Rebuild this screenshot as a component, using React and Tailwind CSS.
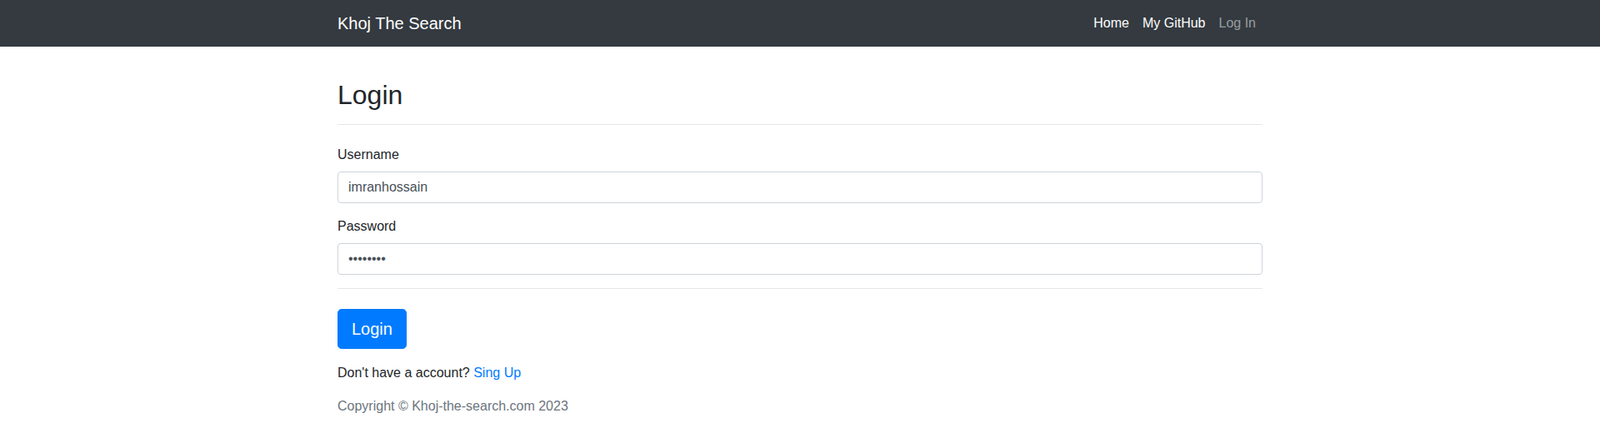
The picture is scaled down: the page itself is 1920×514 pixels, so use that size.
import React from 'react';

const font = { fontFamily: '"Liberation Sans", Arial, sans-serif' };

const Navbar = () => (
  <nav className="bg-[#343a40] h-14">
    <div className="w-[1140px] mx-auto px-[15px] h-full flex items-center justify-between">
      <a href="#" className="text-white text-[20px] leading-[30px] py-[5px]">
        Khoj The Search
      </a>
      <ul className="flex items-center">
        <li><a href="#" className="block px-2 py-2 text-white text-base leading-6">Home</a></li>
        <li><a href="#" className="block px-2 py-2 text-white text-base leading-6">My GitHub</a></li>
        <li><a href="#" className="block px-2 py-2 text-white/50 text-base leading-6">Log In</a></li>
      </ul>
    </div>
  </nav>
);

export default function App() {
  return (
    <div className="bg-white min-h-[514px] text-[#212529]" style={font}>
      <Navbar />
      <main className="w-[1140px] mx-auto px-[15px] pt-[39px]">
        <h2 className="text-[32px] leading-[38.4px] font-normal">Login</h2>
        <hr className="mt-4 border-0 border-t border-[#e6e6e6]" />

        <form onSubmit={(e) => e.preventDefault()}>
          {/* Username */}
          <div className="mt-6 mb-4">
            <label className="block text-base leading-6 mb-2">Username</label>
            <input
              type="text"
              defaultValue="imranhossain"
              className="block w-full h-[38px] px-3 border border-[#ced4da] rounded-[4px] text-base text-[#495057] outline-none"
              style={font}
            />
          </div>
          {/* Password */}
          <div>
            <label className="block text-base leading-6 mb-2">Password</label>
            <input
              type="password"
              defaultValue="password"
              className="block w-full h-[38px] px-3 border border-[#ced4da] rounded-[4px] text-base text-[#495057] outline-none"
              style={font}
            />
          </div>
          <hr className="mt-4 border-0 border-t border-[#e6e6e6]" />
          <button
            type="submit"
            className="mt-6 h-12 px-4 bg-[#007bff] border border-[#007bff] text-white text-[20px] leading-[30px] rounded-[4.8px]"
            style={font}
          >
            Login
          </button>
        </form>

        <p className="mt-[17px] mb-4 text-base leading-6">
          Don't have a account? <a href="#" className="text-[#007bff]">Sing Up</a>
        </p>
        <p className="text-base leading-6 text-[#6c757d]">Copyright © Khoj-the-search.com 2023</p>
      </main>
    </div>
  );
}
